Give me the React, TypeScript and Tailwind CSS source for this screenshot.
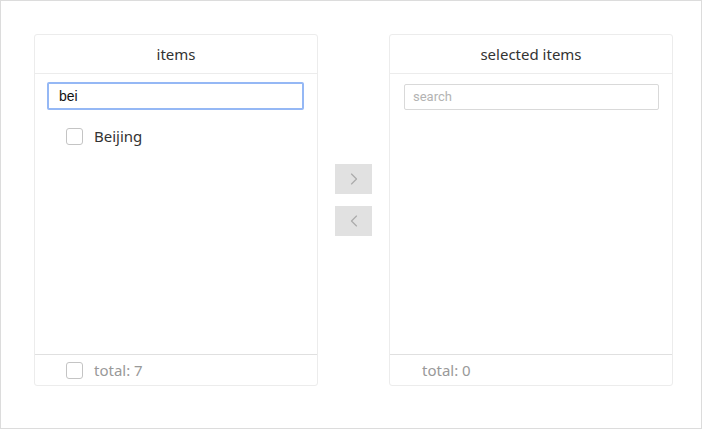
import { ChevronLeft, ChevronRight } from "lucide-react";

function Checkbox({ className = "" }: { className?: string }) {
  return (
    <span
      className={`inline-block w-[17px] h-[17px] shrink-0 rounded-[3px] border border-[#c4c4c4] bg-white ${className}`}
    />
  );
}

export default function App() {
  return (
    <div
      className="w-[702px] h-[429px] border border-[#dcdcdc] bg-white flex items-start pt-[33px] pl-[33px]"
      style={{ fontFamily: '"Noto Sans", "Open Sans", sans-serif' }}
    >
      {/* left panel */}
      <div className="w-[284px] h-[352px] border border-[#ececec] rounded-[3px] flex flex-col">
        <div className="h-[39px] border-b border-[#ececec] flex items-center justify-center text-[15px] text-[#333]">
          items
        </div>
        <div className="px-[12px] pt-[8px]">
          <input
            readOnly
            value="bei"
            className="w-[257px] h-[28px] border-2 border-[#95b8f5] rounded-[2px] px-[10px] text-[14px] text-[#111] outline-none"
            style={{ fontFamily: '"Liberation Sans", Arial, sans-serif' }}
          />
        </div>
        <div className="flex-1 pt-[16px]">
          <div className="flex items-center gap-[11px] pl-[31px] h-[20px] text-[15px] text-[#333]">
            <Checkbox />
            <span>Beijing</span>
          </div>
        </div>
        <div className="h-[31px] border-t border-[#e0e0e0] flex items-center gap-[11px] pl-[31px] text-[15px] text-[#999]">
          <Checkbox />
          <span>total: 7</span>
        </div>
      </div>

      {/* transfer buttons */}
      <div className="w-[71px] flex flex-col items-center gap-[12px] pt-[130px]">
        <button className="w-[37px] h-[30px] bg-[#e1e1e1] flex items-center justify-center">
          <ChevronRight className="w-[20px] h-[20px] text-[#aaaaaa]" strokeWidth={1.4} />
        </button>
        <button className="w-[37px] h-[30px] bg-[#e1e1e1] flex items-center justify-center">
          <ChevronLeft className="w-[20px] h-[20px] text-[#aaaaaa]" strokeWidth={1.4} />
        </button>
      </div>

      {/* right panel */}
      <div className="w-[284px] h-[352px] border border-[#ececec] rounded-[3px] flex flex-col">
        <div className="h-[39px] border-b border-[#ececec] flex items-center justify-center text-[15px] text-[#333]">
          selected items
        </div>
        <div className="pl-[14px] pt-[9px]">
          <input
            readOnly
            placeholder="search"
            className="w-[255px] h-[26px] border border-[#d9d9d9] rounded-[2px] px-[8px] text-[13px] text-[#333] placeholder:text-[#b3b3b3] outline-none"
            style={{ fontFamily: 'Roboto, "Liberation Sans", sans-serif' }}
          />
        </div>
        <div className="flex-1" />
        <div className="h-[31px] border-t border-[#e0e0e0] flex items-center pl-[32px] text-[15px] text-[#999]">
          total: 0
        </div>
      </div>
    </div>
  );
}
